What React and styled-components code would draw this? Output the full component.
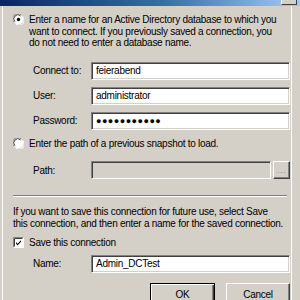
import React from 'react';
import styled, { createGlobalStyle } from 'styled-components';

const GlobalStyle = createGlobalStyle`
  html, body {
    margin: 0;
    padding: 0;
    background: #d4d0c8;
  }
  body {
    font-family: 'Liberation Sans', Arial, sans-serif;
    font-size: 10px;
    letter-spacing: -0.27px;
    color: #000;
  }
`;

const Window = styled.div`
  width: 300px;
  height: 300px;
  overflow: hidden;
  background: #d4d0c8;
  display: flex;
  flex-direction: column;
`;

const TitleBar = styled.div`
  height: 6px;
  flex: none;
  background: linear-gradient(90deg, #0a246a 0%, #3a6ea5 55%, #a6caf0 100%);
  display: flex;
  justify-content: flex-end;
  padding-right: 3px;
`;

const TitleButton = styled.div`
  width: 14px;
  height: 4px;
  background: #d4d0c8;
  border-right: 1px solid #404040;
  border-bottom: 1px solid #404040;
  border-left: 1px solid #fff;
`;

const Frame = styled.div`
  flex: 1;
  display: flex;
  flex-direction: column;
  margin: 0 8px 0 2px;
  border-left: 1px solid #fff;
  border-right: 1px solid #fff;
  padding: 8px 1px 0 10px;
`;

const OptionRow = styled.div`
  display: flex;
  align-items: flex-start;
  gap: 5px;
  line-height: 11.5px;
  margin-top: ${({ $top }) => $top}px;
  white-space: nowrap;
`;

const MarkBox = styled.span`
  flex: none;
  width: 11px;
  height: 11px;
  display: flex;
`;

const Fields = styled.div`
  display: flex;
  flex-direction: column;
  gap: 7px;
  margin-top: ${({ $top }) => $top}px;
  padding-left: 20px;
`;

const FieldRow = styled.div`
  display: flex;
  align-items: center;
  height: 18px;
`;

const Label = styled.span`
  width: 58px;
  flex: none;
`;

const TextBox = styled.div`
  flex: 1;
  min-width: 0;
  height: 18px;
  box-sizing: border-box;
  border-top: 1px solid #808080;
  border-left: 1px solid #808080;
  border-right: 1px solid #fff;
  border-bottom: 1px solid #fff;
  box-shadow: inset 1px 1px 0 #404040, inset -1px -1px 0 #d4d0c8;
  background: ${({ $disabled }) => ($disabled ? '#d4d0c8' : '#fff')};
  padding: 0 4px;
  display: flex;
  align-items: center;
  font-size: ${({ $dots }) => ($dots ? '9px' : 'inherit')};
  letter-spacing: ${({ $dots }) => ($dots ? '0.5px' : 'inherit')};
  white-space: nowrap;
  overflow: hidden;
`;

const BrowseButton = styled.div`
  flex: none;
  width: 17px;
  height: 18px;
  margin-left: 2px;
  box-sizing: border-box;
  border-top: 1px solid #fff;
  border-left: 1px solid #fff;
  border-right: 1px solid #404040;
  border-bottom: 1px solid #404040;
  box-shadow: inset -1px -1px 0 #808080;
  color: #9a968e;
  font-size: 9px;
  display: flex;
  align-items: center;
  justify-content: center;
  letter-spacing: 0.5px;
`;

const Separator = styled.div`
  margin: 16px 3px 0 0;
  height: 0;
  border-top: 1px solid #808080;
  border-bottom: 1px solid #fff;
`;

const InfoText = styled.p`
  margin: 9px 0 0;
  line-height: 12px;
  white-space: nowrap;
`;

const ButtonBar = styled.div`
  display: flex;
  justify-content: flex-end;
  gap: 11px;
  margin-top: 10px;
`;

const PushButton = styled.div`
  width: ${({ $w }) => $w}px;
  height: 23px;
  flex: none;
  box-sizing: border-box;
  display: flex;
  align-items: center;
  justify-content: center;
  border-top: 1px solid ${({ $default }) => ($default ? '#000' : '#fff')};
  border-left: 1px solid ${({ $default }) => ($default ? '#000' : '#fff')};
  border-right: 1px solid ${({ $default }) => ($default ? '#000' : '#404040')};
  border-bottom: 1px solid ${({ $default }) => ($default ? '#000' : '#404040')};
  box-shadow: ${({ $default }) =>
    $default
      ? 'inset 1px 1px 0 #fff, inset -1px -1px 0 #404040, inset -2px -2px 0 #808080'
      : 'inset -1px -1px 0 #808080'};
`;

const Radio = ({ checked }) => (
  <MarkBox>
    <svg width="11" height="11" viewBox="0 0 12 12">
      <circle cx="6" cy="6" r="5.5" fill="#fff" />
      <path d="M1.2 9 A5.3 5.3 0 0 1 9 1.2" fill="none" stroke="#808080" strokeWidth="1" />
      <path d="M2.2 8.4 A4.3 4.3 0 0 1 8.4 2.2" fill="none" stroke="#404040" strokeWidth="1" />
      <path d="M3 10.8 A5.3 5.3 0 0 0 10.8 3" fill="none" stroke="#fff" strokeWidth="1" />
      {checked && <circle cx="6" cy="6" r="1.8" fill="#000" />}
    </svg>
  </MarkBox>
);

const Check = ({ checked }) => (
  <MarkBox>
    <svg width="11" height="11" viewBox="0 0 11 11">
      <rect x="0" y="0" width="11" height="11" fill="#fff" />
      <path d="M0.5 10.5 V0.5 H10.5" fill="none" stroke="#808080" />
      <path d="M1.5 9.5 V1.5 H9.5" fill="none" stroke="#404040" />
      <path d="M0.5 10.5 H10.5 V0.5" fill="none" stroke="#fff" />
      {checked && (
        <path d="M3 5 L4.5 6.8 L8 3.2 V4.8 L4.5 8.4 L3 6.6 Z" fill="#000" />
      )}
    </svg>
  </MarkBox>
);

const App = () => (
  <>
    <GlobalStyle />
    <Window>
      <TitleBar>
        <TitleButton />
      </TitleBar>
      <Frame>
        <OptionRow $top={0}>
          <Radio checked />
          <span>
            Enter a name for an Active Directory database to which you
            <br />
            want to connect. If you previously saved a connection, you
            <br />
            do not need to enter a database name.
          </span>
        </OptionRow>

        <Fields $top={13}>
          <FieldRow>
            <Label>Connect to:</Label>
            <TextBox>feierabend</TextBox>
          </FieldRow>
          <FieldRow>
            <Label>User:</Label>
            <TextBox>administrator</TextBox>
          </FieldRow>
          <FieldRow>
            <Label>Password:</Label>
            <TextBox $dots>●●●●●●●●●●●</TextBox>
          </FieldRow>
        </Fields>

        <OptionRow $top={8}>
          <Radio />
          <span>Enter the path of a previous snapshot to load.</span>
        </OptionRow>

        <Fields $top={12}>
          <FieldRow>
            <Label>Path:</Label>
            <TextBox $disabled />
            <BrowseButton>...</BrowseButton>
          </FieldRow>
        </Fields>

        <Separator />

        <InfoText>
          If you want to save this connection for future use, select Save
          <br />
          this connection, and then enter a name for the saved connection.
        </InfoText>

        <OptionRow $top={7}>
          <Check checked />
          <span>Save this connection</span>
        </OptionRow>

        <Fields $top={6}>
          <FieldRow>
            <Label>Name:</Label>
            <TextBox>Admin_DCTest</TextBox>
          </FieldRow>
        </Fields>

        <ButtonBar>
          <PushButton $default $w={65}>OK</PushButton>
          <PushButton $w={64}>Cancel</PushButton>
        </ButtonBar>
      </Frame>
    </Window>
  </>
);

export default App;
